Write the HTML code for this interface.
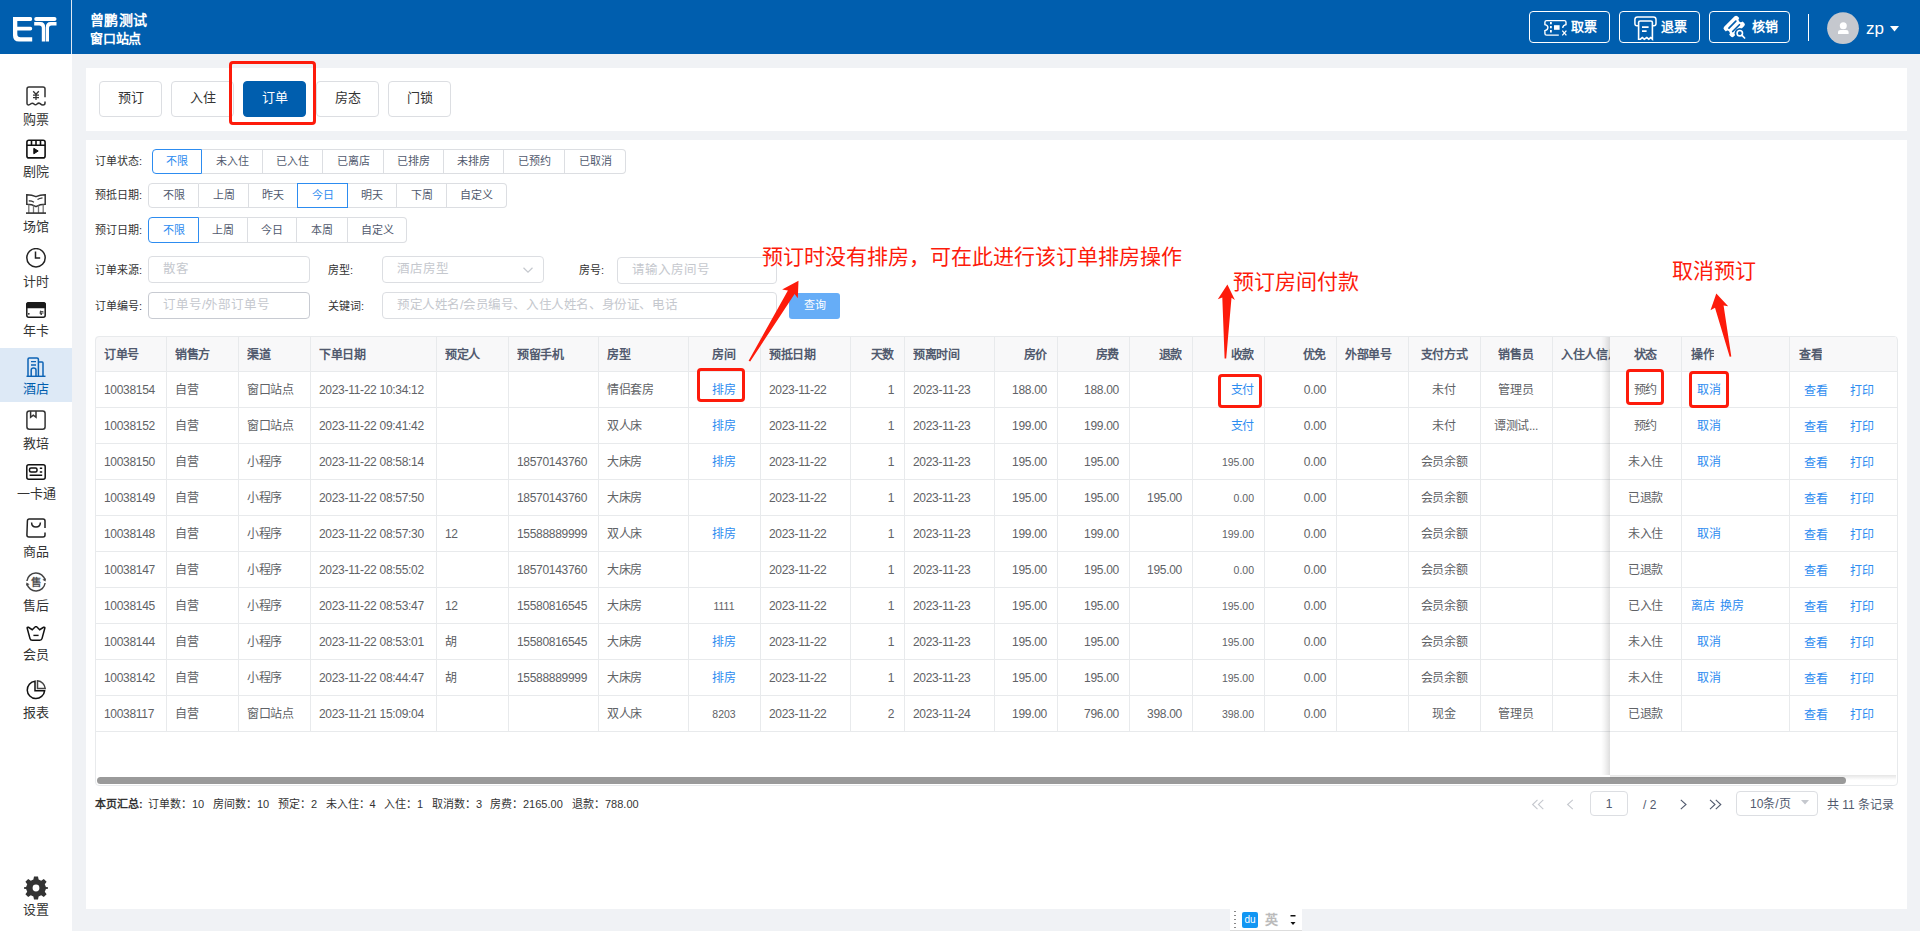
<!DOCTYPE html>
<html lang="zh-CN"><head><meta charset="utf-8">
<style>
*{margin:0;padding:0;box-sizing:border-box}
html,body{width:1920px;height:931px;overflow:hidden;background:#f0f2f5;font-family:"Liberation Sans",sans-serif;color:#515a6e}
.a{position:absolute}
#hdr{left:0;top:0;width:1920px;height:54px;background:#005eae}
#hdr .sep1{left:71px;top:0;width:1px;height:54px;background:#dfe8f2}
#hdr .t{left:90px;color:#fff;font-size:14px;font-weight:bold;line-height:17px;white-space:nowrap}
.hbtn{top:11px;height:32px;width:81px;border:1px solid #fff;border-radius:4px;color:#fff}
.hbtn span{position:absolute;top:5px;font-size:13px;font-weight:bold;line-height:19px;white-space:nowrap}
.hbtn svg{position:absolute}
#side{left:0;top:54px;width:72px;height:877px;background:#fff}
.si{left:0;width:72px;text-align:center;font-size:13px;color:#333;line-height:14px;white-space:nowrap}
.ic{position:absolute;left:26px;width:20px;height:20px}
.p1{left:86px;top:68px;width:1821px;height:63px;background:#fff}
.p2{left:86px;top:140px;width:1821px;height:769px;background:#fff}
.tab{top:81px;width:63px;height:36px;border:1px solid #dcdee2;border-radius:4px;background:#fff;font-size:13px;color:#333;text-align:center;line-height:32px}
.tab.on{background:#005eae;border-color:#005eae;color:#fff}
.redbox{border:3px solid #fd1b0b;border-radius:4px}
.lbl{font-size:11px;color:#333;line-height:14px;white-space:nowrap}
.grp{height:25px;display:flex;font-size:11px;color:#515a6e;line-height:23px;white-space:nowrap}
.grp div{border:1px solid #dcdee2;border-left-width:0;text-align:center;position:relative}
.grp div:first-child{border-left-width:1px;border-radius:4px 0 0 4px}
.grp div:last-child{border-radius:0 4px 4px 0}
.grp div.on{border:1px solid #2d8cf0;color:#2d8cf0;margin-left:-1px;z-index:2}
.grp div.on:first-child{margin-left:0}
.inp{height:27px;border:1px solid #dcdee2;border-radius:4px;background:#fff;font-size:12.5px;color:#c5c8ce;line-height:24px;padding-left:14px;white-space:nowrap;overflow:hidden}
.ann{color:#fd1b0b;font-size:21px;line-height:24px;white-space:nowrap;font-weight:300}
.sum{font-size:11px;color:#333;line-height:14px;white-space:nowrap}
</style></head><body>
<style>
.th{font-size:12px;font-weight:bold;color:#515a6e;line-height:35px;letter-spacing:-0.3px;white-space:nowrap;overflow:hidden}
.td{font-size:12px;color:#606266;line-height:36px;letter-spacing:-0.3px;white-space:nowrap}
.td.lk,.td.lk2{color:#2d8cf0}
.td.sm{font-size:10.5px;letter-spacing:0}
</style><div id="hdr" class="a">
<svg class="a" style="left:0;top:0" width="72" height="54" viewBox="0 0 72 54" fill="#fff">
<path d="M13 17H30.5Q32.2 17 32.2 19Q32.2 21 30.5 21H17.3V26.7H30.5Q32.2 26.7 32.2 28.6Q32.2 30.5 30.5 30.5H17.3V34Q17.3 37.3 20.5 37.3H32.2V41.5H19Q13 41.5 13 35.5Z"/>
<path d="M36.2 17H54.5Q56.5 17 56.5 19Q56.5 21 54.5 21H36.2Q34.2 21 34.2 19Q34.2 17 36.2 17Z"/>
<path d="M34.2 22H40.5Q45.2 22 45.2 27.5V41.5H41.8V28Q41.8 25.5 39.3 25.5H34.2Z"/>
<path d="M56.5 22H50.5Q45.8 22 45.8 27.5V41.5H49V28Q49 25.5 51.5 25.5H56.5Z"/>
</svg>
<div class="a sep1"></div>
<div class="a t" style="top:12px;letter-spacing:0.3px">曾鹏测试</div>
<div class="a t" style="top:29.5px;font-size:13px;letter-spacing:-0.2px">窗口站点</div>
<div class="a hbtn" style="left:1529px">
<svg width="81" height="32" viewBox="0 0 81 32" fill="none" stroke="#fff" stroke-width="1.4">
<path d="M28.8 23.1H16.6Q14.9 23.1 14.9 21.4V18.6Q17.9 18 17.9 15.6Q17.9 13.2 14.9 12.6V10.2Q14.9 8.6 16.6 8.6H34.4Q36 8.6 36 10.2V12.6Q33 13.2 32.6 15.8"/>
<path d="M20.9 9.9V12.3M20.9 13.9V16.3M20.9 17.9V20.5" stroke-width="1.8"/>
<rect x="24" y="13.2" width="5.6" height="4.6" fill="#fff" stroke="none"/>
<path d="M32.3 18.6L36.4 23.4M36.4 18.6L32.3 23.4" stroke-width="1.3"/>
</svg>
<span style="left:41px">取票</span></div>
<div class="a hbtn" style="left:1619px">
<svg width="81" height="32" viewBox="0 0 81 32" fill="none" stroke="#fff" stroke-width="1.5">
<path d="M18 13.8H17Q14.9 13.8 14.9 11.5V7.5Q14.9 4.9 17.5 4.9H33.4Q36 4.9 36 7.5V11.5Q36 13.8 33.8 13.8H33"/>
<path d="M18.6 27.2V10.6Q18.6 9 20.3 9H30.8Q32.4 9 32.4 10.6V27.2L30.7 25.6L28.8 27.2L26.8 25.6L24.3 27.2L22.3 25.6L20.4 27.2Z" stroke-width="1.6"/>
<path d="M22 15.2H28.6M22 19.2H26.6" stroke-width="1.7"/>
</svg>
<span style="left:41px">退票</span></div>
<div class="a hbtn" style="left:1709px">
<svg width="81" height="32" viewBox="0 0 81 32">
<g transform="translate(24.2 14.4) rotate(-45) scale(1.06)">
<path fill="#fff" d="M-7 -6.4H7Q8.9 -6.4 8.9 -4.5V-2.2A2.2 2.2 0 0 0 8.9 2.2V4.5Q8.9 6.4 7 6.4H-7Q-8.9 6.4 -8.9 4.5V2.2A2.2 2.2 0 0 0 -8.9 -2.2V-4.5Q-8.9 -6.4 -7 -6.4Z"/>
<path d="M-4.6 -2.4H4.6M-4.4 2.4H4.6" stroke="#005eae" stroke-width="1.6" stroke-linecap="round"/>
</g>
<circle cx="29.8" cy="21.2" r="5.2" fill="#005eae"/>
<circle cx="29.8" cy="21.2" r="2.7" fill="none" stroke="#fff" stroke-width="1.6"/>
<path d="M31.8 23.2L34.6 26" stroke="#fff" stroke-width="1.7" stroke-linecap="round"/>
</svg>
<span style="left:42px">核销</span></div>
<div class="a" style="left:1808px;top:14px;width:1px;height:27px;background:#fff"></div>
<svg class="a" style="left:1826px;top:12px" width="34" height="34" viewBox="0 0 34 34">
<circle cx="17" cy="16.2" r="15.9" fill="#c5c8ce"/>
<circle cx="17.3" cy="13.7" r="3.5" fill="#fff"/>
<path d="M12 21.9V20Q12 17.9 14.5 17.9H20.1Q22.6 17.9 22.6 20V21.9Z" fill="#fff"/>
</svg>
<div class="a" style="left:1866px;top:19px;color:#fff;font-size:17px;line-height:20px">zp</div>
<svg class="a" style="left:1889px;top:25px" width="11" height="7" viewBox="0 0 11 7"><path d="M1 1H10L5.5 6.4Z" fill="#fff"/></svg>
</div>

<div id="side" class="a"></div>
<div class="a" style="left:0;top:348px;width:72px;height:54px;background:#dde9f6"></div>
<svg class="ic" style="top:86px" viewBox="0 0 20 20" fill="none" stroke="#333" stroke-width="1.5">
<path d="M19 11.2V2.8Q19 1 17 1H3Q1 1 1 3V17.6Q1 19 2.3 19Q3.5 19 5 17.7Q6.5 16.5 8 18Q9.5 19.6 11 18Q12.6 16.5 14.2 17.6Q15.6 19 17 19Q19 19 19 17V15.5"/>
<path d="M7.2 5.2L10 8.2L12.8 5.2M7 9.2H13M7 11.6H13M10 8.2V14" stroke-width="1.3"/>
</svg>
<div class="a si" style="top:113px">购票</div>
<svg class="ic" style="top:139px" viewBox="0 0 20 20" fill="none" stroke="#111" stroke-width="1.6">
<rect x="0.9" y="1.3" width="18.2" height="17.6" rx="2"/>
<path d="M0.9 6.3H19.1M5.5 1.3V6.3M10 1.3V6.3M14.5 1.3V6.3"/>
<path d="M7.8 9.3L12.2 12L7.8 14.8Z" fill="#111" stroke-width="1"/>
</svg>
<div class="a si" style="top:165px">剧院</div>
<svg class="ic" style="top:194px" viewBox="0 0 20 20" fill="none" stroke="#333" stroke-width="1.5">
<path d="M0.8 10.3V0.8Q6 0.8 10 2.6Q14 0.8 19.2 0.8V10.3Q14 10.3 10 12.6Q6 10.3 0.8 10.3Z"/>
<path d="M2.8 7Q5 6.6 8 8.2M11.5 5.5Q13.5 4.3 16.5 3.9" stroke-width="1.3"/>
<path d="M2.8 10.5V19M7.5 11.6V19M12.5 11.6V19M17.2 10.5V19" stroke="#777" stroke-width="1.3"/>
<path d="M0 19.1H20" stroke-width="1.6"/>
</svg>
<div class="a si" style="top:220px">场馆</div>
<svg class="ic" style="top:248px" viewBox="0 0 20 20" fill="none" stroke="#222" stroke-width="1.5">
<circle cx="10" cy="9.8" r="9.2"/>
<path d="M9.5 3.5V10H14.2"/>
</svg>
<div class="a si" style="top:275px">计时</div>
<svg class="ic" style="top:302px;height:16px" viewBox="0 0 20 16" fill="none" stroke="#1a1a1a" stroke-width="1.5">
<rect x="0.8" y="0.8" width="18.4" height="14.4" rx="2"/>
<path d="M0.8 5.6V2.8Q0.8 0.8 2.8 0.8H17.2Q19.2 0.8 19.2 2.8V5.6Z" fill="#1a1a1a"/>
<circle cx="2.8" cy="11.8" r="0.9" fill="#1a1a1a" stroke="none"/>
<path d="M13.8 9.6H17.4M14.6 8.6V12.6M13.4 11H17.6M15.5 11V13" stroke-width="1" stroke="#444"/>
</svg>
<div class="a si" style="top:324px">年卡</div>
<svg class="ic" style="top:357px" viewBox="0 0 20 20" fill="none" stroke="#0c63b5" stroke-width="1.5">
<path d="M2 19V2.2Q2 1 3.2 1H11Q12.4 1 12.4 2.2V19M12.4 5H16.2Q17 5 17 6V19"/>
<path d="M5 4.6H10M5 8H10" stroke-width="1.3"/>
<path d="M5.2 19V13Q5.2 11 7.6 11Q10 11 10 13V19" stroke-width="1.5"/>
<path d="M0.5 19.3H19.5" stroke-width="1.4"/>
</svg>
<div class="a si" style="top:382px;color:#005eae">酒店</div>
<svg class="ic" style="top:410px" viewBox="0 0 20 20" fill="none" stroke="#333" stroke-width="1.5">
<rect x="0.9" y="0.9" width="18.2" height="18.3" rx="2.5"/>
<path d="M4.6 1V7.3L7.3 5.2L10 7.3V1" stroke-width="1.5"/>
</svg>
<div class="a si" style="top:437px">教培</div>
<svg class="ic" style="top:464px;height:16px" viewBox="0 0 20 16" fill="none" stroke="#111" stroke-width="1.5">
<rect x="0.8" y="0.8" width="18.4" height="14.4" rx="2"/>
<rect x="3.5" y="3.9" width="7.5" height="4" rx="1.5"/>
<path d="M13.8 4.3H16.2M13.8 8H16.2M3.6 11.2H16.2" stroke-width="1.4"/>
</svg>
<div class="a si" style="top:487px">一卡通</div>
<svg class="ic" style="top:518px" viewBox="0 0 20 20" fill="none" stroke="#222" stroke-width="1.5">
<path d="M19 10V3Q19 1 17 1H3.2Q1.5 1 1.4 3L0.9 17Q0.9 19 3 19H17Q19 19 19 17V14.5"/>
<path d="M5.6 4.5Q5.6 9 10 9Q14.2 9 14.4 4.5"/>
</svg>
<div class="a si" style="top:545px">商品</div>
<svg class="ic" style="top:572px" viewBox="0 0 20 20" fill="none" stroke="#444" stroke-width="1.5">
<path d="M0.9 9A9.2 9.2 0 0 1 19 8.2M19.1 11A9.2 9.2 0 0 1 1 11.8"/>
<path d="M19.6 9.6L16.4 7.8L19.9 6.3Z M0.4 10.4L3.6 12.2L0.1 13.7Z" fill="#444" stroke="none"/>
<text x="9.8" y="14.2" font-size="10.5" text-anchor="middle" fill="#555" stroke="none" font-weight="bold">售</text>
</svg>
<div class="a si" style="top:599px">售后</div>
<svg class="ic" style="top:626px;height:15px" viewBox="0 0 20 15" fill="none" stroke="#111" stroke-width="1.5">
<path d="M1.2 2.2Q0.8 1 2.5 1.3L6.2 3.7L9.3 0.8Q10 0.3 10.7 0.8L13.7 3.7L17.5 1.3Q19.2 1 18.8 2.2L16 12.6Q15.6 14.2 13.8 14.2H6.2Q4.4 14.2 4 12.6Z"/>
<path d="M7.4 9.4H12.6" stroke-width="1.4"/>
</svg>
<div class="a si" style="top:648px">会员</div>
<svg class="ic" style="top:680px" viewBox="0 0 20 20" fill="none" stroke="#111" stroke-width="1.5">
<path d="M9 1.2A8.7 8.7 0 1 0 18.6 10.8H9Z"/>
<path d="M11.5 0.8V8.5H19.2A8.5 8.5 0 0 0 11.5 0.8Z" stroke="#444"/>
</svg>
<div class="a si" style="top:706px">报表</div>
<svg class="a" style="left:24px;top:876px" width="24" height="24" viewBox="0 0 24 24">
<path fill="#333" fill-rule="evenodd" d="M10 0.5H14L14.6 3.6L17.2 4.7L19.8 2.9L22.6 5.7L20.8 8.3L21.9 10.9L24 11.3V12.7L21.9 13.1L20.8 15.7L22.6 18.3L19.8 21.1L17.2 19.3L14.6 20.4L14 23.5H10L9.4 20.4L6.8 19.3L4.2 21.1L1.4 18.3L3.2 15.7L2.1 13.1L0 12.7V11.3L2.1 10.9L3.2 8.3L1.4 5.7L4.2 2.9L6.8 4.7L9.4 3.6Z M12 8.6A3.4 3.4 0 1 0 12 15.4A3.4 3.4 0 1 0 12 8.6Z"/>
</svg>
<div class="a si" style="top:903px">设置</div>
<div class="a p1"></div>
<div class="a p2"></div>
<div class="a tab" style="left:99px">预订</div>
<div class="a tab" style="left:171px">入住</div>
<div class="a tab on" style="left:243px">订单</div>
<div class="a tab" style="left:316px">房态</div>
<div class="a tab" style="left:388px">门锁</div>
<div class="a redbox" style="left:229px;top:61px;width:87px;height:64px"></div>

<div class="a lbl" style="left:95px;top:154px">订单状态:</div>
<div class="a grp" style="left:152px;top:149px">
<div class="on" style="width:50px">不限</div><div style="width:61px">未入住</div><div style="width:60px">已入住</div><div style="width:61px">已离店</div><div style="width:60px">已排房</div><div style="width:60px">未排房</div><div style="width:61px">已预约</div><div style="width:61px">已取消</div>
</div>
<div class="a lbl" style="left:95px;top:188px">预抵日期:</div>
<div class="a grp" style="left:148px;top:183px">
<div style="width:51px">不限</div><div style="width:50px">上周</div><div style="width:49px">昨天</div><div class="on" style="width:51px">今日</div><div style="width:49px">明天</div><div style="width:50px">下周</div><div style="width:60px">自定义</div>
</div>
<div class="a lbl" style="left:95px;top:223px">预订日期:</div>
<div class="a grp" style="left:148px;top:217px;height:26px;line-height:24px">
<div class="on" style="width:51px">不限</div><div style="width:49px">上周</div><div style="width:49px">今日</div><div style="width:51px">本周</div><div style="width:59px">自定义</div>
</div>

<div class="a lbl" style="left:95px;top:263px">订单来源:</div>
<div class="a inp" style="left:148px;top:256px;width:162px">散客</div>
<div class="a lbl" style="left:328px;top:263px">房型:</div>
<div class="a inp" style="left:382px;top:256px;width:162px">酒店房型</div>
<svg class="a" style="left:522px;top:265.5px" width="12" height="8" viewBox="0 0 12 8"><path d="M1.5 1.8L6 6.2L10.5 1.8" fill="none" stroke="#c5c8ce" stroke-width="1.2"/></svg>
<div class="a lbl" style="left:579px;top:263px">房号:</div>
<div class="a inp" style="left:617px;top:257px;width:160px">请输入房间号</div>
<div class="a lbl" style="left:95px;top:299px">订单编号:</div>
<div class="a inp" style="left:148px;top:292px;width:162px;border-color:#c8cbd2">订单号/外部订单号</div>
<div class="a lbl" style="left:328px;top:299px">关键词:</div>
<div class="a inp" style="left:382px;top:292px;width:395px;letter-spacing:-0.4px">预定人姓名/会员编号、入住人姓名、身份证、电话</div>
<div class="a" style="left:789px;top:293px;width:51px;height:26px;background:#66adf7;border-radius:3px;color:#fff;font-size:11px;line-height:25px;text-align:center">查询</div>
<div class="a" style="left:95px;top:336px;width:1802px;height:35px;background:#f8f8f9;border-radius:4px 4px 0 0"></div>
<div class="a th" style="left:104px;top:338px;width:62px;text-align:left">订单号</div>
<div class="a th" style="left:175px;top:338px;width:63px;text-align:left">销售方</div>
<div class="a th" style="left:247px;top:338px;width:63px;text-align:left">渠道</div>
<div class="a th" style="left:319px;top:338px;width:117px;text-align:left">下单日期</div>
<div class="a th" style="left:445px;top:338px;width:63px;text-align:left">预定人</div>
<div class="a th" style="left:517px;top:338px;width:81px;text-align:left">预留手机</div>
<div class="a th" style="left:607px;top:338px;width:81px;text-align:left">房型</div>
<div class="a th" style="left:688px;top:338px;width:72px;text-align:center">房间</div>
<div class="a th" style="left:769px;top:338px;width:81px;text-align:left">预抵日期</div>
<div class="a th" style="left:850px;top:338px;width:44px;text-align:right">天数</div>
<div class="a th" style="left:913px;top:338px;width:81px;text-align:left">预离时间</div>
<div class="a th" style="left:994px;top:338px;width:53px;text-align:right">房价</div>
<div class="a th" style="left:1057px;top:338px;width:62px;text-align:right">房费</div>
<div class="a th" style="left:1129px;top:338px;width:53px;text-align:right">退款</div>
<div class="a th" style="left:1192px;top:338px;width:62px;text-align:right">收款</div>
<div class="a th" style="left:1264px;top:338px;width:62px;text-align:right">优免</div>
<div class="a th" style="left:1345px;top:338px;width:63px;text-align:left">外部单号</div>
<div class="a th" style="left:1408px;top:338px;width:72px;text-align:center">支付方式</div>
<div class="a th" style="left:1480px;top:338px;width:72px;text-align:center">销售员</div>
<div class="a th" style="left:1561px;top:338px;width:119px;text-align:left">入住人信息</div>
<div class="a td" style="left:104px;top:372px;width:62px;text-align:left">10038154</div>
<div class="a td" style="left:175px;top:372px;width:63px;text-align:left">自营</div>
<div class="a td" style="left:247px;top:372px;width:63px;text-align:left">窗口站点</div>
<div class="a td" style="left:319px;top:372px;width:117px;text-align:left">2023-11-22 10:34:12</div>
<div class="a td" style="left:607px;top:372px;width:81px;text-align:left">情侣套房</div>
<div class="a td lk" style="left:688px;top:372px;width:72px;text-align:center">排房</div>
<div class="a td" style="left:769px;top:372px;width:81px;text-align:left">2023-11-22</div>
<div class="a td" style="left:850px;top:372px;width:44px;text-align:right">1</div>
<div class="a td" style="left:913px;top:372px;width:81px;text-align:left">2023-11-23</div>
<div class="a td" style="left:994px;top:372px;width:53px;text-align:right">188.00</div>
<div class="a td" style="left:1057px;top:372px;width:62px;text-align:right">188.00</div>
<div class="a td lk" style="left:1192px;top:372px;width:62px;text-align:right">支付</div>
<div class="a td" style="left:1264px;top:372px;width:62px;text-align:right">0.00</div>
<div class="a td" style="left:1408px;top:372px;width:72px;text-align:center">未付</div>
<div class="a td" style="left:1480px;top:372px;width:72px;text-align:center">管理员</div>
<div class="a td" style="left:104px;top:408px;width:62px;text-align:left">10038152</div>
<div class="a td" style="left:175px;top:408px;width:63px;text-align:left">自营</div>
<div class="a td" style="left:247px;top:408px;width:63px;text-align:left">窗口站点</div>
<div class="a td" style="left:319px;top:408px;width:117px;text-align:left">2023-11-22 09:41:42</div>
<div class="a td" style="left:607px;top:408px;width:81px;text-align:left">双人床</div>
<div class="a td lk" style="left:688px;top:408px;width:72px;text-align:center">排房</div>
<div class="a td" style="left:769px;top:408px;width:81px;text-align:left">2023-11-22</div>
<div class="a td" style="left:850px;top:408px;width:44px;text-align:right">1</div>
<div class="a td" style="left:913px;top:408px;width:81px;text-align:left">2023-11-23</div>
<div class="a td" style="left:994px;top:408px;width:53px;text-align:right">199.00</div>
<div class="a td" style="left:1057px;top:408px;width:62px;text-align:right">199.00</div>
<div class="a td lk" style="left:1192px;top:408px;width:62px;text-align:right">支付</div>
<div class="a td" style="left:1264px;top:408px;width:62px;text-align:right">0.00</div>
<div class="a td" style="left:1408px;top:408px;width:72px;text-align:center">未付</div>
<div class="a td" style="left:1480px;top:408px;width:72px;text-align:center">谭测试...</div>
<div class="a td" style="left:104px;top:444px;width:62px;text-align:left">10038150</div>
<div class="a td" style="left:175px;top:444px;width:63px;text-align:left">自营</div>
<div class="a td" style="left:247px;top:444px;width:63px;text-align:left">小程序</div>
<div class="a td" style="left:319px;top:444px;width:117px;text-align:left">2023-11-22 08:58:14</div>
<div class="a td" style="left:517px;top:444px;width:81px;text-align:left">18570143760</div>
<div class="a td" style="left:607px;top:444px;width:81px;text-align:left">大床房</div>
<div class="a td lk" style="left:688px;top:444px;width:72px;text-align:center">排房</div>
<div class="a td" style="left:769px;top:444px;width:81px;text-align:left">2023-11-22</div>
<div class="a td" style="left:850px;top:444px;width:44px;text-align:right">1</div>
<div class="a td" style="left:913px;top:444px;width:81px;text-align:left">2023-11-23</div>
<div class="a td" style="left:994px;top:444px;width:53px;text-align:right">195.00</div>
<div class="a td" style="left:1057px;top:444px;width:62px;text-align:right">195.00</div>
<div class="a td sm" style="left:1192px;top:444px;width:62px;text-align:right">195.00</div>
<div class="a td" style="left:1264px;top:444px;width:62px;text-align:right">0.00</div>
<div class="a td" style="left:1408px;top:444px;width:72px;text-align:center">会员余额</div>
<div class="a td" style="left:104px;top:480px;width:62px;text-align:left">10038149</div>
<div class="a td" style="left:175px;top:480px;width:63px;text-align:left">自营</div>
<div class="a td" style="left:247px;top:480px;width:63px;text-align:left">小程序</div>
<div class="a td" style="left:319px;top:480px;width:117px;text-align:left">2023-11-22 08:57:50</div>
<div class="a td" style="left:517px;top:480px;width:81px;text-align:left">18570143760</div>
<div class="a td" style="left:607px;top:480px;width:81px;text-align:left">大床房</div>
<div class="a td" style="left:769px;top:480px;width:81px;text-align:left">2023-11-22</div>
<div class="a td" style="left:850px;top:480px;width:44px;text-align:right">1</div>
<div class="a td" style="left:913px;top:480px;width:81px;text-align:left">2023-11-23</div>
<div class="a td" style="left:994px;top:480px;width:53px;text-align:right">195.00</div>
<div class="a td" style="left:1057px;top:480px;width:62px;text-align:right">195.00</div>
<div class="a td" style="left:1129px;top:480px;width:53px;text-align:right">195.00</div>
<div class="a td sm" style="left:1192px;top:480px;width:62px;text-align:right">0.00</div>
<div class="a td" style="left:1264px;top:480px;width:62px;text-align:right">0.00</div>
<div class="a td" style="left:1408px;top:480px;width:72px;text-align:center">会员余额</div>
<div class="a td" style="left:104px;top:516px;width:62px;text-align:left">10038148</div>
<div class="a td" style="left:175px;top:516px;width:63px;text-align:left">自营</div>
<div class="a td" style="left:247px;top:516px;width:63px;text-align:left">小程序</div>
<div class="a td" style="left:319px;top:516px;width:117px;text-align:left">2023-11-22 08:57:30</div>
<div class="a td" style="left:445px;top:516px;width:63px;text-align:left">12</div>
<div class="a td" style="left:517px;top:516px;width:81px;text-align:left">15588889999</div>
<div class="a td" style="left:607px;top:516px;width:81px;text-align:left">双人床</div>
<div class="a td lk" style="left:688px;top:516px;width:72px;text-align:center">排房</div>
<div class="a td" style="left:769px;top:516px;width:81px;text-align:left">2023-11-22</div>
<div class="a td" style="left:850px;top:516px;width:44px;text-align:right">1</div>
<div class="a td" style="left:913px;top:516px;width:81px;text-align:left">2023-11-23</div>
<div class="a td" style="left:994px;top:516px;width:53px;text-align:right">199.00</div>
<div class="a td" style="left:1057px;top:516px;width:62px;text-align:right">199.00</div>
<div class="a td sm" style="left:1192px;top:516px;width:62px;text-align:right">199.00</div>
<div class="a td" style="left:1264px;top:516px;width:62px;text-align:right">0.00</div>
<div class="a td" style="left:1408px;top:516px;width:72px;text-align:center">会员余额</div>
<div class="a td" style="left:104px;top:552px;width:62px;text-align:left">10038147</div>
<div class="a td" style="left:175px;top:552px;width:63px;text-align:left">自营</div>
<div class="a td" style="left:247px;top:552px;width:63px;text-align:left">小程序</div>
<div class="a td" style="left:319px;top:552px;width:117px;text-align:left">2023-11-22 08:55:02</div>
<div class="a td" style="left:517px;top:552px;width:81px;text-align:left">18570143760</div>
<div class="a td" style="left:607px;top:552px;width:81px;text-align:left">大床房</div>
<div class="a td" style="left:769px;top:552px;width:81px;text-align:left">2023-11-22</div>
<div class="a td" style="left:850px;top:552px;width:44px;text-align:right">1</div>
<div class="a td" style="left:913px;top:552px;width:81px;text-align:left">2023-11-23</div>
<div class="a td" style="left:994px;top:552px;width:53px;text-align:right">195.00</div>
<div class="a td" style="left:1057px;top:552px;width:62px;text-align:right">195.00</div>
<div class="a td" style="left:1129px;top:552px;width:53px;text-align:right">195.00</div>
<div class="a td sm" style="left:1192px;top:552px;width:62px;text-align:right">0.00</div>
<div class="a td" style="left:1264px;top:552px;width:62px;text-align:right">0.00</div>
<div class="a td" style="left:1408px;top:552px;width:72px;text-align:center">会员余额</div>
<div class="a td" style="left:104px;top:588px;width:62px;text-align:left">10038145</div>
<div class="a td" style="left:175px;top:588px;width:63px;text-align:left">自营</div>
<div class="a td" style="left:247px;top:588px;width:63px;text-align:left">小程序</div>
<div class="a td" style="left:319px;top:588px;width:117px;text-align:left">2023-11-22 08:53:47</div>
<div class="a td" style="left:445px;top:588px;width:63px;text-align:left">12</div>
<div class="a td" style="left:517px;top:588px;width:81px;text-align:left">15580816545</div>
<div class="a td" style="left:607px;top:588px;width:81px;text-align:left">大床房</div>
<div class="a td sm" style="left:688px;top:588px;width:72px;text-align:center">1111</div>
<div class="a td" style="left:769px;top:588px;width:81px;text-align:left">2023-11-22</div>
<div class="a td" style="left:850px;top:588px;width:44px;text-align:right">1</div>
<div class="a td" style="left:913px;top:588px;width:81px;text-align:left">2023-11-23</div>
<div class="a td" style="left:994px;top:588px;width:53px;text-align:right">195.00</div>
<div class="a td" style="left:1057px;top:588px;width:62px;text-align:right">195.00</div>
<div class="a td sm" style="left:1192px;top:588px;width:62px;text-align:right">195.00</div>
<div class="a td" style="left:1264px;top:588px;width:62px;text-align:right">0.00</div>
<div class="a td" style="left:1408px;top:588px;width:72px;text-align:center">会员余额</div>
<div class="a td" style="left:104px;top:624px;width:62px;text-align:left">10038144</div>
<div class="a td" style="left:175px;top:624px;width:63px;text-align:left">自营</div>
<div class="a td" style="left:247px;top:624px;width:63px;text-align:left">小程序</div>
<div class="a td" style="left:319px;top:624px;width:117px;text-align:left">2023-11-22 08:53:01</div>
<div class="a td" style="left:445px;top:624px;width:63px;text-align:left">胡</div>
<div class="a td" style="left:517px;top:624px;width:81px;text-align:left">15580816545</div>
<div class="a td" style="left:607px;top:624px;width:81px;text-align:left">大床房</div>
<div class="a td lk" style="left:688px;top:624px;width:72px;text-align:center">排房</div>
<div class="a td" style="left:769px;top:624px;width:81px;text-align:left">2023-11-22</div>
<div class="a td" style="left:850px;top:624px;width:44px;text-align:right">1</div>
<div class="a td" style="left:913px;top:624px;width:81px;text-align:left">2023-11-23</div>
<div class="a td" style="left:994px;top:624px;width:53px;text-align:right">195.00</div>
<div class="a td" style="left:1057px;top:624px;width:62px;text-align:right">195.00</div>
<div class="a td sm" style="left:1192px;top:624px;width:62px;text-align:right">195.00</div>
<div class="a td" style="left:1264px;top:624px;width:62px;text-align:right">0.00</div>
<div class="a td" style="left:1408px;top:624px;width:72px;text-align:center">会员余额</div>
<div class="a td" style="left:104px;top:660px;width:62px;text-align:left">10038142</div>
<div class="a td" style="left:175px;top:660px;width:63px;text-align:left">自营</div>
<div class="a td" style="left:247px;top:660px;width:63px;text-align:left">小程序</div>
<div class="a td" style="left:319px;top:660px;width:117px;text-align:left">2023-11-22 08:44:47</div>
<div class="a td" style="left:445px;top:660px;width:63px;text-align:left">胡</div>
<div class="a td" style="left:517px;top:660px;width:81px;text-align:left">15588889999</div>
<div class="a td" style="left:607px;top:660px;width:81px;text-align:left">大床房</div>
<div class="a td lk" style="left:688px;top:660px;width:72px;text-align:center">排房</div>
<div class="a td" style="left:769px;top:660px;width:81px;text-align:left">2023-11-22</div>
<div class="a td" style="left:850px;top:660px;width:44px;text-align:right">1</div>
<div class="a td" style="left:913px;top:660px;width:81px;text-align:left">2023-11-23</div>
<div class="a td" style="left:994px;top:660px;width:53px;text-align:right">195.00</div>
<div class="a td" style="left:1057px;top:660px;width:62px;text-align:right">195.00</div>
<div class="a td sm" style="left:1192px;top:660px;width:62px;text-align:right">195.00</div>
<div class="a td" style="left:1264px;top:660px;width:62px;text-align:right">0.00</div>
<div class="a td" style="left:1408px;top:660px;width:72px;text-align:center">会员余额</div>
<div class="a td" style="left:104px;top:696px;width:62px;text-align:left">10038117</div>
<div class="a td" style="left:175px;top:696px;width:63px;text-align:left">自营</div>
<div class="a td" style="left:247px;top:696px;width:63px;text-align:left">窗口站点</div>
<div class="a td" style="left:319px;top:696px;width:117px;text-align:left">2023-11-21 15:09:04</div>
<div class="a td" style="left:607px;top:696px;width:81px;text-align:left">双人床</div>
<div class="a td sm" style="left:688px;top:696px;width:72px;text-align:center">8203</div>
<div class="a td" style="left:769px;top:696px;width:81px;text-align:left">2023-11-22</div>
<div class="a td" style="left:850px;top:696px;width:44px;text-align:right">2</div>
<div class="a td" style="left:913px;top:696px;width:81px;text-align:left">2023-11-24</div>
<div class="a td" style="left:994px;top:696px;width:53px;text-align:right">199.00</div>
<div class="a td" style="left:1057px;top:696px;width:62px;text-align:right">796.00</div>
<div class="a td" style="left:1129px;top:696px;width:53px;text-align:right">398.00</div>
<div class="a td sm" style="left:1192px;top:696px;width:62px;text-align:right">398.00</div>
<div class="a td" style="left:1264px;top:696px;width:62px;text-align:right">0.00</div>
<div class="a td" style="left:1408px;top:696px;width:72px;text-align:center">现金</div>
<div class="a td" style="left:1480px;top:696px;width:72px;text-align:center">管理员</div>
<div class="a" style="left:95px;top:336px;width:1803px;height:450px;border:1px solid #e8eaec;border-radius:4px"></div>
<div class="a" style="left:96px;top:371px;width:1801px;height:1px;background:#e8eaec"></div>
<div class="a" style="left:96px;top:407px;width:1801px;height:1px;background:#e8eaec"></div>
<div class="a" style="left:96px;top:443px;width:1801px;height:1px;background:#e8eaec"></div>
<div class="a" style="left:96px;top:479px;width:1801px;height:1px;background:#e8eaec"></div>
<div class="a" style="left:96px;top:515px;width:1801px;height:1px;background:#e8eaec"></div>
<div class="a" style="left:96px;top:551px;width:1801px;height:1px;background:#e8eaec"></div>
<div class="a" style="left:96px;top:587px;width:1801px;height:1px;background:#e8eaec"></div>
<div class="a" style="left:96px;top:623px;width:1801px;height:1px;background:#e8eaec"></div>
<div class="a" style="left:96px;top:659px;width:1801px;height:1px;background:#e8eaec"></div>
<div class="a" style="left:96px;top:695px;width:1801px;height:1px;background:#e8eaec"></div>
<div class="a" style="left:96px;top:731px;width:1801px;height:1px;background:#e8eaec"></div>
<div class="a" style="left:166px;top:336px;width:1px;height:396px;background:#e8eaec"></div>
<div class="a" style="left:238px;top:336px;width:1px;height:396px;background:#e8eaec"></div>
<div class="a" style="left:310px;top:336px;width:1px;height:396px;background:#e8eaec"></div>
<div class="a" style="left:436px;top:336px;width:1px;height:396px;background:#e8eaec"></div>
<div class="a" style="left:508px;top:336px;width:1px;height:396px;background:#e8eaec"></div>
<div class="a" style="left:598px;top:336px;width:1px;height:396px;background:#e8eaec"></div>
<div class="a" style="left:688px;top:336px;width:1px;height:396px;background:#e8eaec"></div>
<div class="a" style="left:760px;top:336px;width:1px;height:396px;background:#e8eaec"></div>
<div class="a" style="left:850px;top:336px;width:1px;height:396px;background:#e8eaec"></div>
<div class="a" style="left:904px;top:336px;width:1px;height:396px;background:#e8eaec"></div>
<div class="a" style="left:994px;top:336px;width:1px;height:396px;background:#e8eaec"></div>
<div class="a" style="left:1057px;top:336px;width:1px;height:396px;background:#e8eaec"></div>
<div class="a" style="left:1129px;top:336px;width:1px;height:396px;background:#e8eaec"></div>
<div class="a" style="left:1192px;top:336px;width:1px;height:396px;background:#e8eaec"></div>
<div class="a" style="left:1264px;top:336px;width:1px;height:396px;background:#e8eaec"></div>
<div class="a" style="left:1336px;top:336px;width:1px;height:396px;background:#e8eaec"></div>
<div class="a" style="left:1408px;top:336px;width:1px;height:396px;background:#e8eaec"></div>
<div class="a" style="left:1480px;top:336px;width:1px;height:396px;background:#e8eaec"></div>
<div class="a" style="left:1552px;top:336px;width:1px;height:396px;background:#e8eaec"></div>
<div class="a" style="left:97px;top:777px;width:1749px;height:7px;border-radius:4px;background:#9a9a9a"></div>
<div class="a" style="left:1601px;top:337px;width:9px;height:438px;background:linear-gradient(to right,rgba(0,0,0,0),rgba(0,0,0,0.04) 40%,rgba(0,0,0,0.13))"></div>
<div class="a" style="left:1610px;top:775px;width:286px;height:5px;background:linear-gradient(to bottom,rgba(0,0,0,0.1),rgba(0,0,0,0))"></div>
<div class="a" style="left:1610px;top:337px;width:286px;height:438px;background:#fff"></div>
<div class="a" style="left:1610px;top:337px;width:286px;height:34px;background:#f8f8f9"></div>
<div class="a th" style="left:1610px;top:338px;width:71px;text-align:center">状态</div>
<div class="a th" style="left:1691px;top:338px">操作</div>
<div class="a th" style="left:1799px;top:338px">查看</div>
<div class="a td" style="left:1610px;top:372px;width:71px;text-align:center">预约</div>
<div class="a td lk" style="left:1697px;top:372px">取消</div>
<div class="a td lk2" style="left:1804px;top:373px">查看</div>
<div class="a td lk2" style="left:1850px;top:373px">打印</div>
<div class="a td" style="left:1610px;top:408px;width:71px;text-align:center">预约</div>
<div class="a td lk" style="left:1697px;top:408px">取消</div>
<div class="a td lk2" style="left:1804px;top:409px">查看</div>
<div class="a td lk2" style="left:1850px;top:409px">打印</div>
<div class="a td" style="left:1610px;top:444px;width:71px;text-align:center">未入住</div>
<div class="a td lk" style="left:1697px;top:444px">取消</div>
<div class="a td lk2" style="left:1804px;top:445px">查看</div>
<div class="a td lk2" style="left:1850px;top:445px">打印</div>
<div class="a td" style="left:1610px;top:480px;width:71px;text-align:center">已退款</div>
<div class="a td lk2" style="left:1804px;top:481px">查看</div>
<div class="a td lk2" style="left:1850px;top:481px">打印</div>
<div class="a td" style="left:1610px;top:516px;width:71px;text-align:center">未入住</div>
<div class="a td lk" style="left:1697px;top:516px">取消</div>
<div class="a td lk2" style="left:1804px;top:517px">查看</div>
<div class="a td lk2" style="left:1850px;top:517px">打印</div>
<div class="a td" style="left:1610px;top:552px;width:71px;text-align:center">已退款</div>
<div class="a td lk2" style="left:1804px;top:553px">查看</div>
<div class="a td lk2" style="left:1850px;top:553px">打印</div>
<div class="a td" style="left:1610px;top:588px;width:71px;text-align:center">已入住</div>
<div class="a td lk" style="left:1691px;top:588px">离店</div>
<div class="a td lk" style="left:1720px;top:588px">换房</div>
<div class="a td lk2" style="left:1804px;top:589px">查看</div>
<div class="a td lk2" style="left:1850px;top:589px">打印</div>
<div class="a td" style="left:1610px;top:624px;width:71px;text-align:center">未入住</div>
<div class="a td lk" style="left:1697px;top:624px">取消</div>
<div class="a td lk2" style="left:1804px;top:625px">查看</div>
<div class="a td lk2" style="left:1850px;top:625px">打印</div>
<div class="a td" style="left:1610px;top:660px;width:71px;text-align:center">未入住</div>
<div class="a td lk" style="left:1697px;top:660px">取消</div>
<div class="a td lk2" style="left:1804px;top:661px">查看</div>
<div class="a td lk2" style="left:1850px;top:661px">打印</div>
<div class="a td" style="left:1610px;top:696px;width:71px;text-align:center">已退款</div>
<div class="a td lk2" style="left:1804px;top:697px">查看</div>
<div class="a td lk2" style="left:1850px;top:697px">打印</div>
<div class="a" style="left:1610px;top:371px;width:286px;height:1px;background:#e8eaec"></div>
<div class="a" style="left:1610px;top:407px;width:286px;height:1px;background:#e8eaec"></div>
<div class="a" style="left:1610px;top:443px;width:286px;height:1px;background:#e8eaec"></div>
<div class="a" style="left:1610px;top:479px;width:286px;height:1px;background:#e8eaec"></div>
<div class="a" style="left:1610px;top:515px;width:286px;height:1px;background:#e8eaec"></div>
<div class="a" style="left:1610px;top:551px;width:286px;height:1px;background:#e8eaec"></div>
<div class="a" style="left:1610px;top:587px;width:286px;height:1px;background:#e8eaec"></div>
<div class="a" style="left:1610px;top:623px;width:286px;height:1px;background:#e8eaec"></div>
<div class="a" style="left:1610px;top:659px;width:286px;height:1px;background:#e8eaec"></div>
<div class="a" style="left:1610px;top:695px;width:286px;height:1px;background:#e8eaec"></div>
<div class="a" style="left:1610px;top:731px;width:286px;height:1px;background:#e8eaec"></div>
<div class="a" style="left:1681px;top:336px;width:1px;height:396px;background:#e8eaec"></div>
<div class="a" style="left:1789px;top:336px;width:1px;height:396px;background:#e8eaec"></div>
<div class="a redbox" style="left:697px;top:368px;width:48px;height:34px"></div>
<div class="a redbox" style="left:1218px;top:374px;width:44px;height:34px"></div>
<div class="a redbox" style="left:1626px;top:369px;width:38px;height:36px"></div>
<div class="a redbox" style="left:1689px;top:371px;width:40px;height:37px"></div>
<div class="a ann" style="left:762px;top:245px">预订时没有排房，可在此进行该订单排房操作</div>
<div class="a ann" style="left:1233px;top:270px">预订房间付款</div>
<div class="a ann" style="left:1672px;top:259px">取消预订</div>
<svg class="a" style="left:0;top:0" width="1920" height="931" viewBox="0 0 1920 931">
<path d="M748.6 360.8L787.9 290.5L782.1 289.5L798.5 280.8L797.8 298.2L794.6 293.9L750.2 361.6Z" fill="#fd1b0b"/>
<path d="M1224.6 358.6L1222.3 297.4L1217.8 299.2L1227.4 284.6L1234.9 299.9L1231.5 297.8L1226.2 358.6Z" fill="#fd1b0b"/>
<path d="M1729.7 356.7L1715 307.8L1710.5 310.3L1716.3 293.6L1728.2 306.3L1723.6 305.6L1731.3 356.5Z" fill="#fd1b0b"/>
</svg>
<div class="a sum" style="left:95px;top:797px"><b>本页汇总:</b></div>
<div class="a sum" style="left:148px;top:797px">订单数：10</div>
<div class="a sum" style="left:213px;top:797px">房间数：10</div>
<div class="a sum" style="left:278px;top:797px">预定：2</div>
<div class="a sum" style="left:325.5px;top:797px">未入住：4</div>
<div class="a sum" style="left:384px;top:797px">入住：1</div>
<div class="a sum" style="left:432px;top:797px">取消数：3</div>
<div class="a sum" style="left:490px;top:797px">房费：2165.00</div>
<div class="a sum" style="left:572px;top:797px">退款：788.00</div>
<svg class="a" style="left:1530px;top:797px" width="200" height="16" viewBox="1530 797 200 16" fill="none" stroke-width="1.1">
<path d="M1537.5 799.8L1532.6 804.5L1537.5 809.2M1543.3 799.8L1538.4 804.5L1543.3 809.2" stroke="#c5c8ce"/>
<path d="M1572.8 799.8L1567.6 804.5L1572.8 809.2" stroke="#c5c8ce"/>
<path d="M1680.8 799.8L1686 804.5L1680.8 809.2" stroke="#515a6e"/>
<path d="M1710 799.8L1715 804.5L1710 809.2M1715.8 799.8L1720.8 804.5L1715.8 809.2" stroke="#515a6e"/>
</svg>
<div class="a" style="left:1590px;top:791px;width:38px;height:25px;border:1px solid #dcdee2;border-radius:4px;text-align:center;font-size:12px;line-height:25px;color:#515a6e">1</div>
<div class="a" style="left:1643px;top:797px;font-size:12px;line-height:16px;color:#515a6e">/ 2</div>
<div class="a" style="left:1736px;top:791px;width:82px;height:25px;border:1px solid #dcdee2;border-radius:4px;font-size:12px;line-height:25px;color:#515a6e;padding-left:13px">10条/页</div>
<svg class="a" style="left:1801px;top:800px" width="8" height="5" viewBox="0 0 8 5"><path d="M0 0H8L4 4.5Z" fill="#c5c8ce"/></svg>
<div class="a" style="left:1827px;top:797px;font-size:12px;line-height:16px;color:#515a6e;white-space:nowrap">共 11 条记录</div>
<div class="a" style="left:1230px;top:909px;width:72px;height:22px;background:#fff;border-bottom:1px solid #ddd"></div>
<div class="a" style="left:1234px;top:911px;width:2px;height:18px;background:repeating-linear-gradient(to bottom,#888 0,#888 1px,transparent 1px,transparent 4px)"></div>
<div class="a" style="left:1242px;top:912px;width:16px;height:16px;background:#1296f3;border-radius:2px;color:#fff;font-size:10px;line-height:15px;text-align:center">du</div>
<div class="a" style="left:1265px;top:912px;color:#bbb;font-size:13px;font-weight:bold;line-height:16px">英</div>
<svg class="a" style="left:1290px;top:915px" width="6" height="12" viewBox="0 0 6 12"><rect x="0.5" y="0" width="5" height="1.5" fill="#111"/><path d="M0.5 7H5.5L3 10Z" fill="#111"/></svg>

</body></html>
